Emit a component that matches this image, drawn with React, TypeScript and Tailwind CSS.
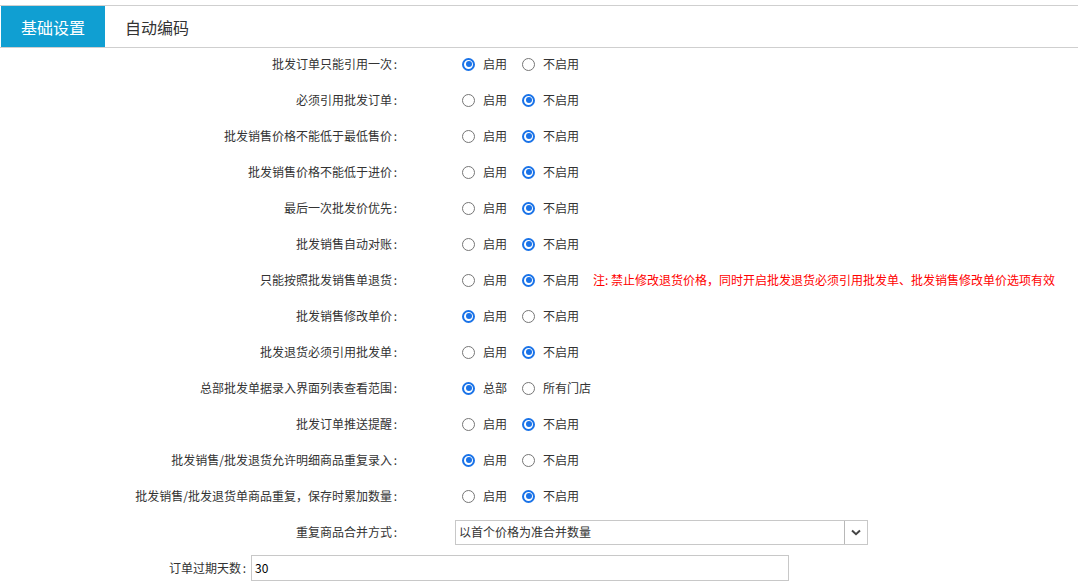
import React from "react";

type Row = { label: string; a: string; b: string; checked: 0 | 1; note?: string };

const rows: Row[] = [
  { label: "批发订单只能引用一次", a: "启用", b: "不启用", checked: 0 },
  { label: "必须引用批发订单", a: "启用", b: "不启用", checked: 1 },
  { label: "批发销售价格不能低于最低售价", a: "启用", b: "不启用", checked: 1 },
  { label: "批发销售价格不能低于进价", a: "启用", b: "不启用", checked: 1 },
  { label: "最后一次批发价优先", a: "启用", b: "不启用", checked: 1 },
  { label: "批发销售自动对账", a: "启用", b: "不启用", checked: 1 },
  {
    label: "只能按照批发销售单退货",
    a: "启用",
    b: "不启用",
    checked: 1,
    note: "注: 禁止修改退货价格，同时开启批发退货必须引用批发单、批发销售修改单价选项有效",
  },
  { label: "批发销售修改单价", a: "启用", b: "不启用", checked: 0 },
  { label: "批发退货必须引用批发单", a: "启用", b: "不启用", checked: 1 },
  { label: "总部批发单据录入界面列表查看范围", a: "总部", b: "所有门店", checked: 0 },
  { label: "批发订单推送提醒", a: "启用", b: "不启用", checked: 1 },
  { label: "批发销售/批发退货允许明细商品重复录入", a: "启用", b: "不启用", checked: 0 },
  { label: "批发销售/批发退货单商品重复，保存时累加数量", a: "启用", b: "不启用", checked: 1 },
];

function Radio({ on }: { on: boolean }) {
  return on ? (
    <span className="w-[13px] h-[13px] rounded-full border-2 border-[#1a73e8] flex items-center justify-center shrink-0">
      <span className="w-[6px] h-[6px] rounded-full bg-[#1a73e8]" />
    </span>
  ) : (
    <span className="w-[13px] h-[13px] rounded-full border border-[#767676] bg-white shrink-0" />
  );
}

function Label({ text, w }: { text: string; w: string }) {
  return (
    <div className={`${w} text-right shrink-0`}>
      {text}
      <span className="inline-block w-[7px] text-center">:</span>
    </div>
  );
}

export default function App() {
  return (
    <div
      className="w-[1079px] h-[586px] bg-white text-[12px] text-[#333] overflow-hidden"
      style={{ fontFamily: '"Noto Sans CJK SC", "Noto Sans", sans-serif' }}
    >
      <div className="pt-[5px]">
        <div className="flex h-[43px] border-t border-b border-[#cfcfcf] w-[1078px]">
          <div className="ml-[1px] w-[104px] bg-[#109fd2] text-white text-[16px] flex items-center justify-center">
            基础设置
          </div>
          <div className="pl-[20px] text-[16px] text-[#333] flex items-center">自动编码</div>
        </div>
      </div>
      <div className="flex flex-col gap-[4px]">
        {rows.map((r, i) => (
          <div key={i} className="flex items-center h-[32px]">
            <Label text={r.label} w="w-[399px]" />
            <div className="flex items-center ml-[63px]">
              <Radio on={r.checked === 0} />
              <span className="ml-[8px]">{r.a}</span>
              <span className="ml-[15px] flex items-center">
                <Radio on={r.checked === 1} />
              </span>
              <span className="ml-[8px]">{r.b}</span>
              {r.note && <span className="ml-[14px] text-[#ff0000]">{r.note}</span>}
            </div>
          </div>
        ))}
        <div className="flex items-center h-[32px]">
          <Label text="重复商品合并方式" w="w-[399px]" />
          <div className="ml-[56px] w-[413px] h-[25px] border border-[#c8c8c8] flex">
            <div className="flex-1 flex items-center pl-[3px] text-[#333]">以首个价格为准合并数量</div>
            <div className="w-[23px] border-l border-[#b8b8b8] flex items-center justify-center">
              <svg width="10" height="7" viewBox="0 0 10 7">
                <path d="M1 1.5 L5 5.2 L9 1.5" stroke="#444" strokeWidth="2" fill="none" />
              </svg>
            </div>
          </div>
        </div>
        <div className="flex items-center h-[32px]">
          <Label text="订单过期天数" w="w-[248px]" />
          <div className="ml-[3px] w-[538px] h-[26px] border border-[#c8c8c8] flex items-center pl-[3px] text-black">
            30
          </div>
        </div>
      </div>
    </div>
  );
}
